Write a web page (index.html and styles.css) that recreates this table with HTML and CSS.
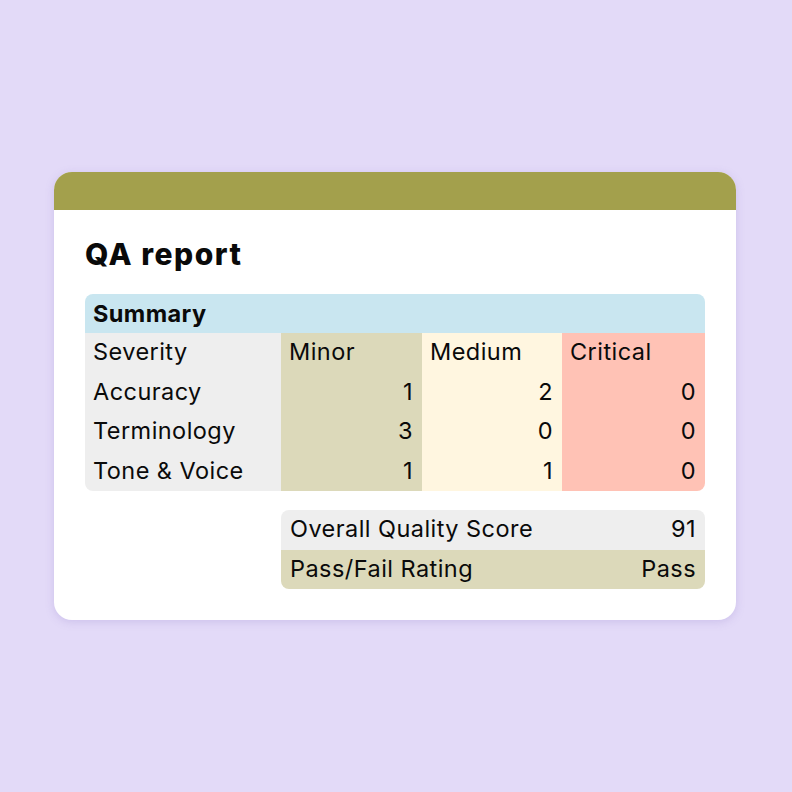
FILE: index.html
```html
<!DOCTYPE html>
<html>
<head>
<meta charset="utf-8">
<link rel="stylesheet" href="styles.css">
</head>
<body>
<div class="page">
  <div class="card">
    <div class="card-top"></div>
    <div class="card-body">
      <h1 class="title">QA report</h1>
      <div class="summary">
        <div class="summary-head">Summary</div>
        <div class="grid">
          <div class="col col-label">
            <div class="cell">Severity</div>
            <div class="cell">Accuracy</div>
            <div class="cell">Terminology</div>
            <div class="cell">Tone &amp; Voice</div>
          </div>
          <div class="col col-minor">
            <div class="cell">Minor</div>
            <div class="cell num">1</div>
            <div class="cell num">3</div>
            <div class="cell num">1</div>
          </div>
          <div class="col col-medium">
            <div class="cell">Medium</div>
            <div class="cell num">2</div>
            <div class="cell num">0</div>
            <div class="cell num">1</div>
          </div>
          <div class="col col-critical">
            <div class="cell">Critical</div>
            <div class="cell num">0</div>
            <div class="cell num">0</div>
            <div class="cell num">0</div>
          </div>
        </div>
      </div>
      <div class="score">
        <div class="score-row row-grey"><span>Overall Quality Score</span><span>91</span></div>
        <div class="score-row row-olive"><span>Pass/Fail Rating</span><span>Pass</span></div>
      </div>
    </div>
  </div>
</div>
</body>
</html>
```

FILE: styles.css
```css
html, body {
  margin: 0;
  padding: 0;
}
body {
  background: #e3daf8;
  font-family: Inter, "Noto Sans", sans-serif;
  color: #0a0a0a;
}
.page {
  width: 792px;
  height: 792px;
  padding: 172px 0 0 54px;
  box-sizing: border-box;
}
.card {
  width: 682px;
  height: 448px;
  background: #fff;
  border-radius: 18px;
  overflow: hidden;
  box-shadow: 0 2px 8px rgba(140, 120, 200, 0.25);
}
.card-top {
  height: 38px;
  background: #a3a04c;
}
.card-body {
  padding: 0 31px;
}
.title {
  margin: 0;
  padding-top: 27px;
  height: 84px;
  box-sizing: border-box;
  font-size: 30px;
  font-weight: 800;
  line-height: 34px;
  letter-spacing: 1.5px;
}
.summary {
  border-radius: 8px;
  overflow: hidden;
}
.summary-head {
  background: #c9e6f0;
  height: 39px;
  line-height: 39px;
  padding-left: 8px;
  font-size: 23.5px;
  font-weight: 700;
  letter-spacing: 0.4px;
}
.grid {
  display: grid;
  grid-template-columns: 196px 141px 140px 143px;
}
.col-label { background: #eeeeee; }
.col-minor { background: #dcd9ba; }
.col-medium { background: #fff6e0; }
.col-critical { background: #ffc2b5; }
.cell {
  height: 39.5px;
  line-height: 38.5px;
  padding: 0 9px 0 8px;
  font-size: 23.5px;
  letter-spacing: 0.45px;
}
.num {
  text-align: right;
}
.score {
  margin-top: 19px;
  margin-left: 196px;
  border-radius: 8px;
  overflow: hidden;
}
.score-row {
  display: flex;
  justify-content: space-between;
  height: 39.5px;
  line-height: 38.5px;
  padding: 0 9px 0 9px;
  font-size: 23.5px;
  letter-spacing: 0.45px;
}
.row-grey { background: #eeeeee; }
.row-olive { background: #dcd9ba; }
```
